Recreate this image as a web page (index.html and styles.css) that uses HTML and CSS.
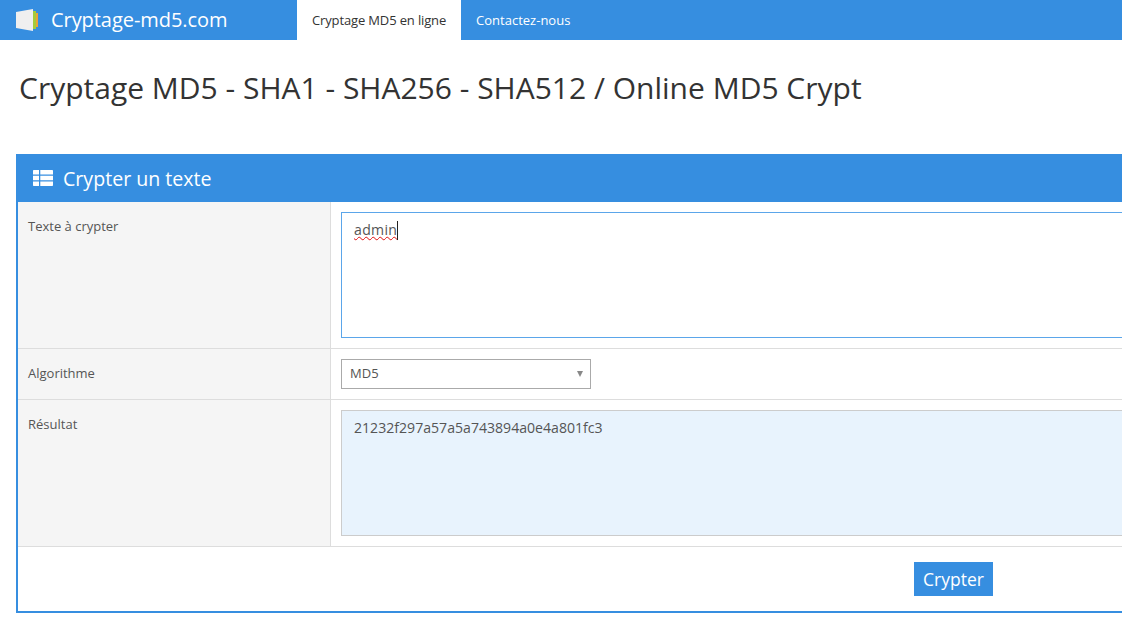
FILE: index.html
```html
<!DOCTYPE html>
<html lang="fr">
<head>
  <meta charset="UTF-8" />
  <title>Cryptage MD5</title>
  <link rel="stylesheet" href="styles.css">
</head>
<body>

  <!-- Top bar -->
  <nav class="navbar">
    <a class="brand" href="#">
      <svg class="brand-logo" width="24" height="24" viewBox="0 0 24 24">
        <rect x="21" y="5" width="2" height="14" fill="#e8a33a"/>
        <rect x="18" y="3" width="3" height="18" fill="#a4cc3c"/>
        <polygon points="1,4 18,1 18,23 1,20" fill="#efefef"/>
      </svg>
      <span>Cryptage-md5.com</span>
    </a>
    <ul class="nav-links">
      <li class="active"><a href="#">Cryptage MD5 en ligne</a></li>
      <li><a href="#">Contactez-nous</a></li>
    </ul>
  </nav>

  <h1>Cryptage MD5 - SHA1 - SHA256 - SHA512 / Online MD5 Crypt</h1>

  <!-- Form panel -->
  <section class="panel">
    <header class="panel-head">
      <svg class="panel-icon" width="20" height="16" viewBox="0 0 20 16">
        <path fill="#fff" d="M0 1C0 .4.4 0 1 0h5v4.6H0zM7.3 0H19c.6 0 1 .4 1 1v3.6H7.3zM0 5.7h6v4.6H0zM7.3 5.7H20v4.6H7.3zM0 11.4h6V16H1c-.6 0-1-.4-1-1zM7.3 11.4H20V15c0 .6-.4 1-1 1H7.3z"/>
      </svg>
      <h2>Crypter un texte</h2>
    </header>

    <div class="row row-tall">
      <label class="row-label">Texte à crypter</label>
      <div class="row-field">
        <div class="text-input focused"><span class="misspelled">admin</span><span class="caret"></span></div>
      </div>
    </div>

    <div class="row">
      <label class="row-label">Algorithme</label>
      <div class="row-field">
        <div class="select-box">
          <select>
            <option>MD5</option>
            <option>SHA1</option>
            <option>SHA256</option>
            <option>SHA512</option>
          </select>
        </div>
      </div>
    </div>

    <div class="row row-tall">
      <label class="row-label">Résultat</label>
      <div class="row-field">
        <div class="text-input result">21232f297a57a5a743894a0e4a801fc3</div>
      </div>
    </div>

    <div class="panel-foot">
      <button type="button" class="btn">Crypter</button>
    </div>
  </section>

</body>
</html>
```

FILE: styles.css
```css
* {
  box-sizing: border-box;
  margin: 0;
  padding: 0;
}

html,
body {
  height: 624px;
  overflow: hidden;
}

body {
  background: #fff;
  color: #555;
  font-family: "Open Sans", sans-serif;
  font-size: 13px;
}

a {
  text-decoration: none;
}

.navbar {
  display: flex;
  height: 40px;
  background: #368ee0;
}

.brand {
  display: flex;
  align-items: center;
  width: 297px;
  padding-left: 15px;
  padding-bottom: 1px;
  color: #fff;
  font-size: 20px;
  letter-spacing: -0.06px;
}

.brand-logo {
  margin-right: 12px;
}

.nav-links {
  display: flex;
  list-style: none;
}

.nav-links a {
  display: block;
  padding: 0 15px;
  color: #fff;
  line-height: 40px;
}

.nav-links .active a {
  background: #fff;
  color: #333;
  letter-spacing: -0.14px;
}

h1 {
  padding: 26px 0 0 19px;
  height: 114px;
  color: #333;
  font-size: 30px;
  font-weight: 400;
  line-height: 44px;
}

.panel {
  width: 1875px;
  margin-left: 16px;
  border: 2px solid #368ee0;
  border-top: 0;
}

.panel-head {
  display: flex;
  align-items: center;
  height: 48px;
  padding-left: 15px;
  background: #368ee0;
  color: #fff;
}

.panel-icon {
  margin-right: 10px;
}

.panel-head h2 {
  font-size: 19.6px;
  font-weight: 400;
}

.row {
  display: flex;
  border-bottom: 1px solid #ddd;
}

.row-label {
  flex: 0 0 313px;
  padding: 15px 10px;
  background: #f5f5f5;
  border-right: 1px solid #ddd;
  line-height: 18px;
}

.row-field {
  flex: 1;
  padding: 10px;
}

.text-input {
  height: 126px;
  padding: 8px 12px;
  border: 1px solid #ccc;
  font-size: 14.1px;
  line-height: 18px;
}

.text-input.focused {
  border-color: #5ba6ea;
}

.text-input.result {
  background: #e8f3fd;
  border-color: #ccc;
}

.misspelled {
  letter-spacing: 0.3px;
  text-decoration: underline wavy #e01010 1.1px;
  text-underline-offset: 1px;
}

.caret {
  display: inline-block;
  width: 1px;
  height: 19px;
  background: #222;
  vertical-align: top;
}

.select-box {
  position: relative;
  width: 250px;
}

.select-box::after {
  content: '';
  position: absolute;
  top: 12px;
  right: 8px;
  border: 3px solid transparent;
  border-top: 6px solid #888;
  border-bottom: 0;
}

.select-box select {
  display: block;
  width: 100%;
  height: 30px;
  padding: 0 0 2px 8px;
  appearance: none;
  background: #fff;
  border: 1px solid #aaa;
  border-radius: 0;
  color: #555;
  font-family: inherit;
  font-size: 13px;
}

.panel-foot {
  height: 64px;
  padding-top: 15px;
  text-align: center;
}

.btn {
  width: 79px;
  height: 34px;
  padding-bottom: 1px;
  background: #368ee0;
  border: none;
  color: #fff;
  font-family: inherit;
  font-size: 17.5px;
}
```
